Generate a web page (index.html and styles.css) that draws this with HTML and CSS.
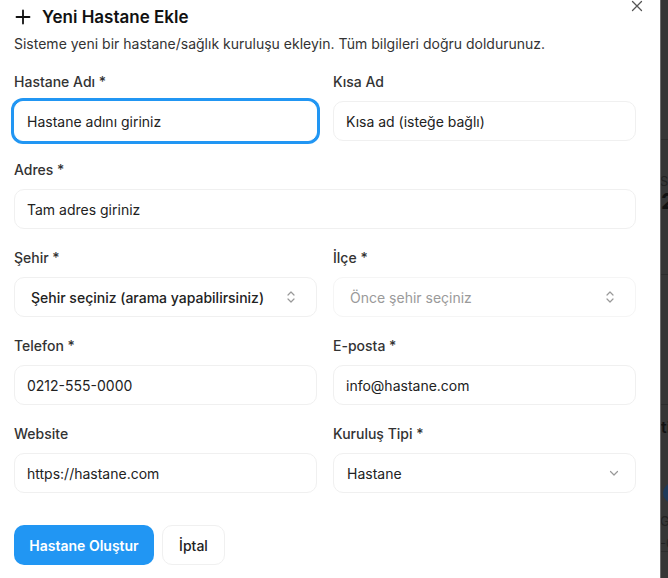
FILE: index.html
```html
<!DOCTYPE html>
<html lang="tr">
<head>
<meta charset="utf-8">
<title>Yeni Hastane Ekle</title>
<link rel="stylesheet" href="styles.css">
</head>
<body>
<div class="screen">
  <div class="modal">
    <button class="close" aria-label="Kapat">
      <svg width="12" height="12" viewBox="0 0 12 12" fill="none" stroke="#555" stroke-width="1.3" stroke-linecap="round"><path d="M1.5 1.5l9 9M10.5 1.5l-9 9"/></svg>
    </button>
    <div class="head">
      <h2 class="title">
        <svg class="plus" width="16" height="16" viewBox="0 0 16 16" fill="none" stroke="#111" stroke-width="1.8" stroke-linecap="round"><path d="M8 1.5v13M1.5 8h13"/></svg>
        Yeni Hastane Ekle
      </h2>
      <p class="subtitle">Sisteme yeni bir hastane/sağlık kuruluşu ekleyin. Tüm bilgileri doğru doldurunuz.</p>
    </div>
    <form class="form">
      <div class="field">
        <label class="label">Hastane Adı *</label>
        <input class="input focused" placeholder="Hastane adını giriniz">
      </div>
      <div class="field">
        <label class="label">Kısa Ad</label>
        <input class="input" placeholder="Kısa ad (isteğe bağlı)">
      </div>
      <div class="field wide">
        <label class="label">Adres *</label>
        <input class="input" placeholder="Tam adres giriniz">
      </div>
      <div class="field">
        <label class="label">Şehir *</label>
        <div class="combo">
          <span>Şehir seçiniz (arama yapabilirsiniz)</span>
          <svg width="12" height="14" viewBox="0 0 12 14" fill="none" stroke="#999" stroke-width="1.2" stroke-linecap="round" stroke-linejoin="round"><path d="M3 5l3-3 3 3M3 9l3 3 3-3"/></svg>
        </div>
      </div>
      <div class="field">
        <label class="label">İlçe *</label>
        <div class="combo disabled">
          <span>Önce şehir seçiniz</span>
          <svg width="12" height="14" viewBox="0 0 12 14" fill="none" stroke="#999" stroke-width="1.2" stroke-linecap="round" stroke-linejoin="round"><path d="M3 5l3-3 3 3M3 9l3 3 3-3"/></svg>
        </div>
      </div>
      <div class="field">
        <label class="label">Telefon *</label>
        <input class="input" placeholder="0212-555-0000">
      </div>
      <div class="field">
        <label class="label">E-posta *</label>
        <input class="input" placeholder="info@hastane.com">
      </div>
      <div class="field">
        <label class="label">Website</label>
        <input class="input" placeholder="https://hastane.com">
      </div>
      <div class="field">
        <label class="label">Kuruluş Tipi *</label>
        <div class="select">
          <span>Hastane</span>
          <svg width="12" height="12" viewBox="0 0 12 12" fill="none" stroke="#999" stroke-width="1.2" stroke-linecap="round" stroke-linejoin="round"><path d="M2.5 4.5L6 8l3.5-3.5"/></svg>
        </div>
      </div>
    </form>
    <div class="actions">
      <button class="btn primary">Hastane Oluştur</button>
      <button class="btn ghost">İptal</button>
    </div>
  </div>
  <div class="behind">
    <div class="bg-block b1"></div>
    <div class="bg-block b2"><span class="small">Se</span><span class="big">2</span></div>
    <div class="bg-block b3"></div>
    <div class="bg-block b4"><span class="mid">ti</span><span class="dot"></span><span class="small">Ga</span><span class="small">-0</span></div>
  </div>
</div>
</body>
</html>
```
FILE: styles.css
```css
* { box-sizing: border-box; }
html, body { margin: 0; padding: 0; }
body {
  font-family: Inter, "Noto Sans", sans-serif;
  color: #222;
  background: #333;
  overflow: hidden;
}
.screen {
  display: flex;
  width: 668px;
  height: 578px;
}
.modal {
  position: relative;
  width: 661px;
  flex: none;
  height: 578px;
  background: #fff;
  border-right: 1px solid #6b6b6b;
  padding: 5px 24px 0 14px;
}
.close {
  position: absolute;
  top: 0px;
  left: 631px;
  width: 12px;
  height: 12px;
  padding: 0;
  border: 0;
  background: none;
  display: flex;
}
.head { display: flex; flex-direction: column; gap: 5px; }
.title {
  margin: 0;
  display: flex;
  align-items: center;
  gap: 11px;
  font-size: 17px;
  line-height: 24px;
  font-weight: 600;
  color: #111;
  padding-left: 1px;
}
.subtitle {
  margin: 0;
  font-size: 14px;
  line-height: 20px;
  color: #333;
}
.form {
  margin-top: 18px;
  display: grid;
  grid-template-columns: 303px 303px;
  column-gap: 16px;
  row-gap: 19px;
}
.field { display: flex; flex-direction: column; gap: 9px; }
.field.wide { grid-column: 1 / span 2; }
.label {
  font-size: 14px;
  line-height: 20px;
  font-weight: 500;
  color: #333;
}
.input, .combo, .select {
  height: 40px;
  border: 1px solid #f0f0f0;
  border-radius: 10px;
  background: #fff;
  font-family: inherit;
  font-size: 14px;
  color: #222;
}
.input {
  padding: 0 12px;
  outline: none;
}
.input::placeholder { color: #222; opacity: 1; }
.input.focused {
  box-shadow: 0 0 0 3px #2196f3;
  border-color: #fff;
  border-radius: 9px;
}
.combo {
  display: flex;
  align-items: center;
  justify-content: space-between;
  padding: 0 19px 0 16px;
  font-weight: 500;
}
.combo.disabled { color: #9a9a9a; font-weight: 400; border-color: #f5f5f5; }
.select {
  display: flex;
  align-items: center;
  justify-content: space-between;
  padding: 0 15px 0 13px;
}
.actions {
  margin-top: 32px;
  display: flex;
  gap: 8px;
}
.btn {
  height: 40px;
  border-radius: 10px;
  font-family: inherit;
  font-size: 14px;
  padding: 0;
  white-space: nowrap;
}
.btn.primary {
  background: #2196f3;
  border: 0;
  color: #fff;
  font-weight: 600;
  width: 140px;
}
.btn.ghost {
  background: #fff;
  border: 1px solid #f0f0f0;
  color: #222;
  font-weight: 500;
  width: 63px;
}
.behind {
  flex: 1;
  overflow: hidden;
  display: flex;
  flex-direction: column;
  background: #363636;
  color: #111;
  font-size: 16px;
}
.bg-block { border-bottom: 1px solid #2c2c2c; display: flex; flex-direction: column; }
.b1 { height: 140px; }
.b2 { height: 135px; padding-top: 33px; }
.b3 { height: 130px; }
.b4 { padding-top: 12px; gap: 6px; }
.small { font-size: 13px; color: #222; line-height: 16px; margin-left: -1px; }
.big { font-size: 22px; font-weight: 700; color: #111; line-height: 24px; }
.mid { font-size: 16px; font-weight: 600; color: #111; line-height: 20px; }
.dot { width: 20px; height: 20px; border-radius: 50%; background: #1e3a5a; margin: 40px 0 4px 2px; }
```
